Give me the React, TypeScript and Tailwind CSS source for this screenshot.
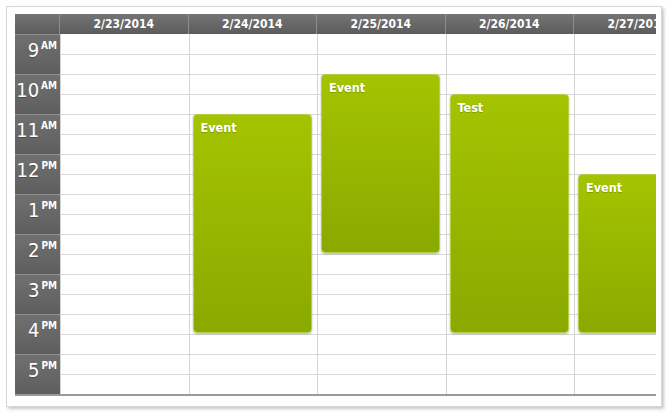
import React from "react";

const days = ["2/23/2014", "2/24/2014", "2/25/2014", "2/26/2014", "2/27/2014"];
const hours: [string, string][] = [
  ["9", "AM"],
  ["10", "AM"],
  ["11", "AM"],
  ["12", "PM"],
  ["1", "PM"],
  ["2", "PM"],
  ["3", "PM"],
  ["4", "PM"],
  ["5", "PM"],
];

type Ev = { day: number; start: number; end: number; text: string };
// start/end in half-hour slots from 9AM
const events: Ev[] = [
  { day: 1, start: 4, end: 15, text: "Event" },
  { day: 2, start: 2, end: 11, text: "Event" },
  { day: 3, start: 3, end: 15, text: "Test" },
  { day: 4, start: 7, end: 15, text: "Event" },
];

const font = { fontFamily: '"DejaVu Sans Condensed", "DejaVu Sans", "Liberation Sans", sans-serif' };

export default function App() {
  return (
    <div className="w-[672px] h-[417px] bg-white pt-[6px] pl-[6px]" style={font}>
      <div className="w-[656px] h-[401px] border border-[#d6d6d6] bg-white shadow-[2px_2px_3px_rgba(0,0,0,0.22)] pt-[7px] pl-[8px]">
        <div className="w-[641px] overflow-hidden border-b-2 border-[#9a9a9a]">
          {/* header */}
          <div className="flex h-[20px] bg-gradient-to-b from-[#747474] to-[#5c5c5c]">
            <div className="w-[45px] shrink-0 border-r border-[#8c8c8c]" />
            {days.map((d) => (
              <div
                key={d}
                className="w-[128.5px] shrink-0 border-r border-[#8c8c8c] flex items-center justify-center text-white text-[12px] font-bold leading-none whitespace-nowrap overflow-hidden"
              >
                {d}
              </div>
            ))}
          </div>
          {/* body */}
          <div className="flex">
            <div className="w-[45px] shrink-0 flex flex-col">
              {hours.map(([h, s]) => (
                <div
                  key={h}
                  className="h-[40px] border-t border-[#8e8e8e] bg-gradient-to-b from-[#707070] to-[#5e5e5e] flex justify-end pr-[3px] pt-[4px] text-white"
                >
                  <span className="text-[20px] leading-[22px] [text-shadow:0_1px_0_rgba(0,0,0,0.3)]">{h}</span>
                  <span className="text-[10px] leading-[12px] ml-[2px] mt-[1px] font-bold">{s}</span>
                </div>
              ))}
            </div>
            {days.map((d, di) => (
              <div key={d} className="relative w-[128.5px] shrink-0 border-l border-[#d4d4d4]">
                {Array.from({ length: 18 }).map((_, i) => (
                  <div key={i} className={`h-[20px] ${i === 0 ? "" : "border-t border-[#d8d8d8]"}`} />
                ))}
                {events
                  .filter((e) => e.day === di)
                  .map((e, k) => (
                    <div
                      key={k}
                      className="absolute left-[3px] w-[119px] rounded-[4px] border border-[#b4d04a] bg-gradient-to-b from-[#a4c400] to-[#8aa900] shadow-[0_1px_2px_rgba(0,0,0,0.3)] pl-[7px] pt-[4px] text-white text-[12.5px] font-bold [text-shadow:0_1px_1px_rgba(0,0,0,0.2)]"
                      style={{ top: e.start * 20, height: (e.end - e.start) * 20 - 1 }}
                    >
                      {e.text}
                    </div>
                  ))}
              </div>
            ))}
          </div>
        </div>
      </div>
    </div>
  );
}
